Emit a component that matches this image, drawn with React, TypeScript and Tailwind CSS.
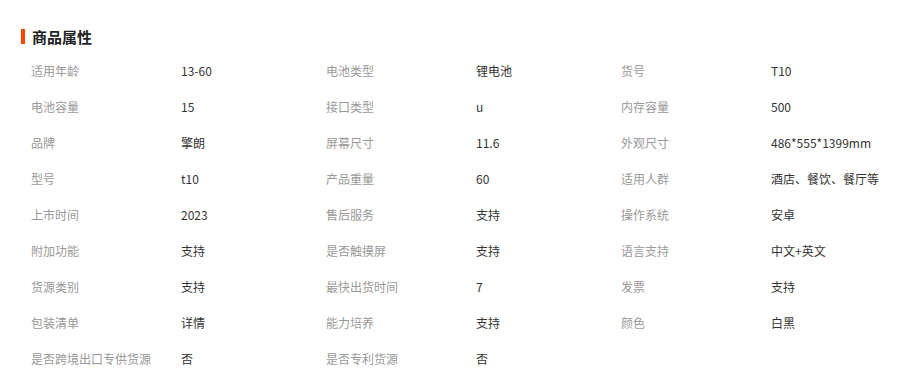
const rows: [string, string][][] = [
  [['适用年龄', '13-60'], ['电池类型', '锂电池'], ['货号', 'T10']],
  [['电池容量', '15'], ['接口类型', 'u'], ['内存容量', '500']],
  [['品牌', '擎朗'], ['屏幕尺寸', '11.6'], ['外观尺寸', '486*555*1399mm']],
  [['型号', 't10'], ['产品重量', '60'], ['适用人群', '酒店、餐饮、餐厅等']],
  [['上市时间', '2023'], ['售后服务', '支持'], ['操作系统', '安卓']],
  [['附加功能', '支持'], ['是否触摸屏', '支持'], ['语言支持', '中文+英文']],
  [['货源类别', '支持'], ['最快出货时间', '7'], ['发票', '支持']],
  [['包装清单', '详情'], ['能力培养', '支持'], ['颜色', '白黑']],
  [['是否跨境出口专供货源', '否'], ['是否专利货源', '否']],
]

export default function App() {
  return (
    <div
      className="w-[913px] h-[376px] bg-white overflow-hidden"
      style={{ fontFamily: '"Microsoft YaHei", "Noto Sans CJK SC", sans-serif' }}
    >
      {/* 标题 */}
      <div className="flex items-center h-[22px] mt-[25px] pl-[21px]">
        <div className="w-[4px] h-[15px] bg-[#ff4400]" aria-hidden="true" />
        <h2 className="ml-[7px] text-[15px] font-bold text-[#222] leading-none">商品属性</h2>
      </div>

      {/* 属性表 */}
      <div className="mt-[6px] pl-[31px]">
        {rows.map((row, i) => (
          <div key={i} className="flex h-[36px] items-center text-[12px]">
            {row.map(([k, v]) => (
              <div key={k} className="flex w-[295px] shrink-0">
                <span className="w-[150px] shrink-0 text-[#999]">{k}</span>
                <span className="text-[#333]">{v}</span>
              </div>
            ))}
          </div>
        ))}
      </div>
    </div>
  )
}
